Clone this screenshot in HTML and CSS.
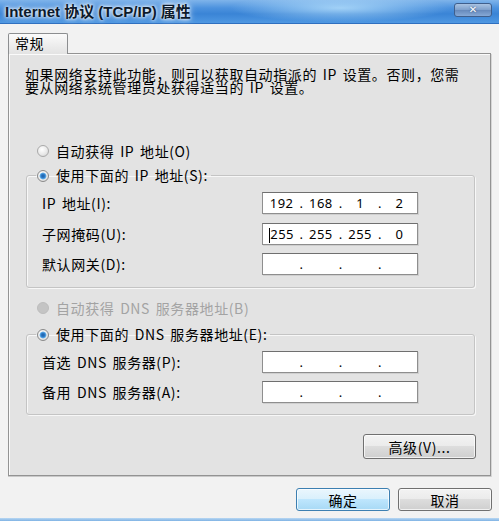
FILE: index.html
```html
<!DOCTYPE html>
<html lang="zh-CN">
<head>
<meta charset="utf-8">
<title>Internet 协议 (TCP/IP) 属性</title>
<link rel="stylesheet" href="styles.css">
</head>
<body>
<div class="titlebar">
  <span class="title">Internet 协议 (TCP/IP) 属性</span>
  <span class="close">✕</span>
</div>
<div class="tabs"><div class="tab">常规</div></div>
<div class="panel">
  <p class="intro">如果网络支持此功能，则可以获取自动指派的 IP 设置。否则，您需<br>要从网络系统管理员处获得适当的 IP 设置。</p>

  <div class="radio-row r-auto-ip"><span class="radio"></span>自动获得 IP 地址(O)</div>

  <fieldset class="group g-ip">
    <legend><span class="radio checked"></span>使用下面的 IP 地址(S):</legend>
    <div class="rows">
      <div class="row">
        <span class="lbl">IP 地址(I):</span>
        <div class="ip"><span class="seg">192</span><span class="dot">.</span><span class="seg">168</span><span class="dot">.</span><span class="seg">1</span><span class="dot">.</span><span class="seg">2</span></div>
      </div>
      <div class="row">
        <span class="lbl">子网掩码(U):</span>
        <div class="ip"><span class="seg"><span class="caret"></span>255</span><span class="dot">.</span><span class="seg">255</span><span class="dot">.</span><span class="seg">255</span><span class="dot">.</span><span class="seg">0</span></div>
      </div>
      <div class="row">
        <span class="lbl">默认网关(D):</span>
        <div class="ip"><span class="seg"></span><span class="dot">.</span><span class="seg"></span><span class="dot">.</span><span class="seg"></span><span class="dot">.</span><span class="seg"></span></div>
      </div>
    </div>
  </fieldset>

  <div class="radio-row r-auto-dns disabled"><span class="radio off"></span>自动获得 DNS 服务器地址(B)</div>

  <fieldset class="group g-dns">
    <legend><span class="radio checked"></span>使用下面的 DNS 服务器地址(E):</legend>
    <div class="rows">
      <div class="row">
        <span class="lbl">首选 DNS 服务器(P):</span>
        <div class="ip"><span class="seg"></span><span class="dot">.</span><span class="seg"></span><span class="dot">.</span><span class="seg"></span><span class="dot">.</span><span class="seg"></span></div>
      </div>
      <div class="row">
        <span class="lbl">备用 DNS 服务器(A):</span>
        <div class="ip"><span class="seg"></span><span class="dot">.</span><span class="seg"></span><span class="dot">.</span><span class="seg"></span><span class="dot">.</span><span class="seg"></span></div>
      </div>
    </div>
  </fieldset>

  <div class="adv-row"><button class="btn adv">高级(V)...</button></div>
</div>
<div class="footer">
  <button class="btn ok">确定</button>
  <button class="btn">取消</button>
</div>
<div class="bottom-edge"></div>
</body>
</html>
```

FILE: styles.css
```css
* { box-sizing: border-box; }
html, body { margin: 0; padding: 0; }
body {
  width: 499px;
  height: 521px;
  overflow: hidden;
  background: #f2f2f2;
  font-family: "Noto Sans CJK SC", "Noto Sans", sans-serif;
  font-size: 14px;
  letter-spacing: 0.6px;
  word-spacing: 2px;
  color: #000;
}

.titlebar {
  height: 24px;
  display: flex;
  justify-content: space-between;
  align-items: flex-start;
  padding-left: 5px;
  border-bottom: 1px solid #2f6fbf;
  background:
    radial-gradient(ellipse 110px 14px at 340px 8px, rgba(190,230,255,0.75), rgba(190,230,255,0) 100%),
    linear-gradient(to bottom, #7fb4ea 0%, #4c92de 35%, #3a84d6 60%, #4f98e2 100%);
}
.title {
  font-family: "Liberation Sans", "Noto Sans CJK SC", sans-serif;
  font-weight: bold;
  font-size: 15px;
  line-height: 23px;
  letter-spacing: 0;
  word-spacing: 0;
  color: #0c1a2c;
  text-shadow: 0 0 3px #fff, 0 0 5px rgba(255,255,255,0.9), 0 0 8px rgba(255,255,255,0.6);
}
.close {
  margin: 3px 7px 0 0;
  width: 38px;
  height: 14px;
  border: 1px solid #3f5f8c;
  border-radius: 3px;
  background: linear-gradient(to bottom, #a9c3e2 0%, #7d9fcb 50%, #6689bb 51%, #86a9d6 100%);
  color: #fff;
  font-family: "DejaVu Sans", sans-serif;
  font-weight: bold;
  font-size: 10px;
  line-height: 12px;
  text-align: center;
  letter-spacing: 0;
  text-shadow: 0 0 2px #2b4a78;
}

.tabs {
  height: 29px;
  padding: 9px 0 0 8px;
}
.tab {
  position: relative;
  z-index: 1;
  width: 60px;
  height: 21px;
  border: 1px solid #8c8e90;
  border-bottom: none;
  border-radius: 2px 2px 0 0;
  background: linear-gradient(to bottom, #fbfbfb 0%, #ececec 60%, #e3e3e3 100%);
  padding-left: 6px;
  line-height: 19px;
}

.panel {
  margin: 0 8px;
  height: 423px;
  border: 1px solid #939393;
  background: #e3e3e3;
  box-shadow: inset 1px 1px 0 #fafafa, 0 1px 0 #c9c9c9, 1px 1px 0 #d6d6d6;
  padding: 0 15px 0 16px;
}

.intro {
  margin: 14px 0 0;
  line-height: 13px;
}

.radio-row {
  display: flex;
  align-items: center;
  height: 16px;
  padding-left: 12px;
}
.radio-row .radio { margin-right: 7px; }
.r-auto-ip { margin-top: 49px; }
.r-auto-dns { margin-top: 12px; }
.disabled { color: #a3a3a3; }

.radio {
  display: inline-block;
  width: 12px;
  height: 12px;
  border-radius: 50%;
  border: 1px solid #a9a9a9;
  background: radial-gradient(circle at 40% 35%, #ffffff 0%, #e9e9e9 55%, #cfcfcf 100%);
  vertical-align: middle;
}
.radio.checked {
  border-color: #8a8a8a;
  background:
    radial-gradient(circle, #1d5ea6 0, #2f7cc8 2px, #63b0ea 3px, rgba(99,176,234,0) 3.8px),
    radial-gradient(circle at 40% 35%, #ffffff 0%, #e9e9e9 55%, #cfcfcf 100%);
}
.radio.off {
  border-color: #bdbdbd;
  background: #c4c4c4;
}

.group {
  margin: 8px 0 0 1px;
  padding: 0;
  width: 449px;
  border: 1px solid #c4c4c4;
  border-radius: 3px;
  box-shadow: inset 1px 1px 0 #f7f7f7, 1px 1px 0 #f7f7f7;
}
.g-dns { margin-top: 10px; }
.group legend {
  margin-left: 9px;
  padding: 0 3px 0 1px;
  height: 16px;
  line-height: 16px;
}
.group legend .radio {
  margin: -2px 7px 0 0;
}

.rows {
  display: flex;
  flex-direction: column;
  gap: 8.5px;
  padding: 9px 0 12px 15px;
}
.g-dns .rows {
  gap: 8px;
  padding-bottom: 11px;
}
.row {
  display: flex;
  align-items: center;
  height: 22px;
}
.lbl { width: 220px; }

.ip {
  width: 156px;
  height: 22px;
  display: flex;
  align-items: center;
  padding-left: 1px;
  background: #fff;
  border: 1px solid #8e8e8e;
  border-top-color: #6f6f6f;
  box-shadow: 1px 1px 0 #cfcfcf;
  font-family: "Noto Sans", "DejaVu Sans", sans-serif;
  font-size: 13px;
  letter-spacing: 0.5px;
  word-spacing: 0;
}
.seg {
  width: 36px;
  text-align: center;
  line-height: 20px;
}
.dot {
  width: 4px;
  text-align: center;
  line-height: 20px;
  letter-spacing: 0;
}
.caret {
  display: inline-block;
  width: 1px;
  height: 15px;
  background: #000;
  vertical-align: middle;
}

.adv-row {
  display: flex;
  justify-content: flex-end;
  margin-top: 19px;
  margin-right: -1px;
}

.btn {
  width: 94px;
  height: 23px;
  padding: 0;
  border: 1px solid #707070;
  border-radius: 3px;
  background: linear-gradient(to bottom, #f3f3f3 0%, #ebebeb 49%, #dddddd 50%, #cfcfcf 100%);
  box-shadow: inset 0 0 0 1px rgba(255,255,255,0.7);
  font-family: "Noto Sans CJK SC", sans-serif;
  font-size: 14px;
  letter-spacing: 0.6px;
  color: #000;
  line-height: 20px;
}
.btn.adv {
  width: 113px;
  height: 25px;
}
.btn.ok {
  border-color: #3c7fb1;
  background: linear-gradient(to bottom, #eaf6fd 0%, #d9f0fc 49%, #bee6fd 50%, #a7d9f5 100%);
}

.footer {
  display: flex;
  justify-content: flex-end;
  gap: 8px;
  padding: 12px 7px 0 0;
}

.bottom-edge {
  margin-top: 7px;
  height: 3px;
  background: linear-gradient(to bottom, #b9d8f3 0%, #7fb2e4 100%);
}
```
